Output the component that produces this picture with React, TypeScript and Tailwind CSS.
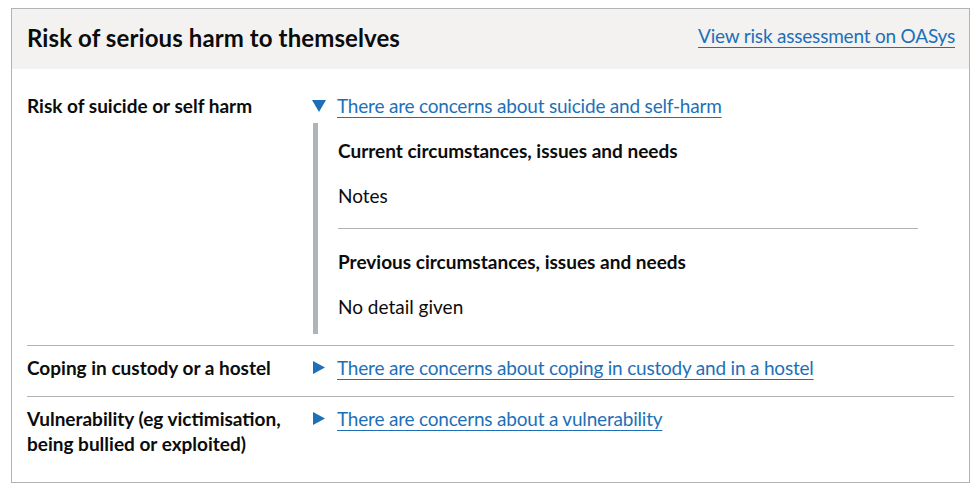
const ROWS_AFTER = [
  {
    key: 'Coping in custody or a hostel',
    link: 'There are concerns about coping in custody and in a hostel',
  },
  {
    key: 'Vulnerability (eg victimisation, being bullied or exploited)',
    link: 'There are concerns about a vulnerability',
  },
];

function Arrow({ open }: { open?: boolean }) {
  return open ? (
    <svg width="14" height="12" viewBox="0 0 14 12" className="mt-[7px] shrink-0" aria-hidden>
      <polygon points="0,0 14,0 7,12" fill="#1d70b8" />
    </svg>
  ) : (
    <svg width="12" height="13" viewBox="0 0 12 13" className="mt-[6px] shrink-0" aria-hidden>
      <polygon points="0,0 12,6.5 0,13" fill="#1d70b8" />
    </svg>
  );
}

const linkCls =
  'text-[#1d70b8] underline decoration-1 underline-offset-[4px] text-[19px] leading-[25px] tracking-[-0.2px]';

export default function App() {
  return (
    <div className="min-h-screen bg-white pt-[8px] pl-[11px] pr-[10px] font-['Lato',sans-serif] text-[#0b0c0c]">
      <section className="border border-[#b1b4b6]">
        {/* header */}
        <div className="flex items-start justify-between bg-[#f3f2f1] pl-[15px] pr-[14px] pt-[14px] h-[60px]">
          <h2 className="text-[24px] leading-[30px] font-bold tracking-[0.1px]">Risk of serious harm to themselves</h2>
          <a href="#" className={linkCls}>
            View risk assessment on OASys
          </a>
        </div>

        <div className="px-[15px] pt-[14px] pb-[15px]">
          {/* open row */}
          <div className="flex border-b border-[#b1b4b6] pt-[10px] pb-[11px]">
            <div className="w-[285px] shrink-0 text-[19px] leading-[25px] font-bold">
              Risk of suicide or self harm
            </div>
            <div className="flex-1">
              <div className="flex items-start gap-[11px]">
                <Arrow open />
                <a href="#" className={linkCls}>
                  There are concerns about suicide and self-harm
                </a>
              </div>
              <div className="mt-[5px] ml-[1px] border-l-[5px] border-[#b1b4b6] py-[15px] pl-[20px] pr-[36px]">
                <h3 className="text-[19px] leading-[25px] font-bold">Current circumstances, issues and needs</h3>
                <p className="mt-[20px] text-[19px] leading-[25px]">Notes</p>
                <hr className="mt-[20px] border-t border-[#b1b4b6]" />
                <h3 className="mt-[20px] text-[19px] leading-[25px] font-bold">
                  Previous circumstances, issues and needs
                </h3>
                <p className="mt-[20px] text-[19px] leading-[25px]">No detail given</p>
              </div>
            </div>
          </div>

          {ROWS_AFTER.map((r, i) => (
            <div
              key={r.key}
              className={`flex pt-[9px] ${i === 0 ? 'border-b border-[#b1b4b6] pb-[16px]' : 'pb-[11px]'}`}
            >
              <div className="w-[285px] shrink-0 pr-[20px] text-[19px] leading-[25px] font-bold">{r.key}</div>
              <div className="flex flex-1 items-start gap-[12px] pl-[1px]">
                <Arrow />
                <a href="#" className={linkCls}>
                  {r.link}
                </a>
              </div>
            </div>
          ))}
        </div>
      </section>
    </div>
  );
}
